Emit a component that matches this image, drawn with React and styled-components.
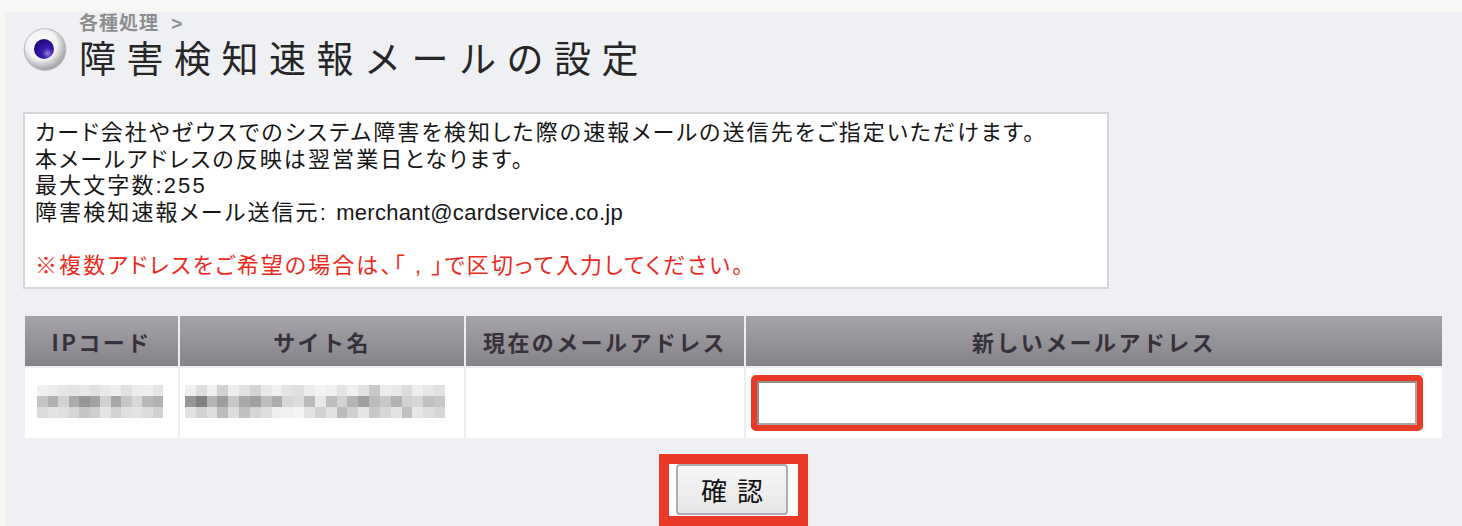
import React from 'react';
import styled, { createGlobalStyle } from 'styled-components';

const GlobalStyle = createGlobalStyle`
  html, body { margin: 0; padding: 0; background: #f7f7f6; }
  body {
    font-family: "Noto Sans CJK JP", "Noto Sans", sans-serif;
    color: #151515;
  }
`;

const RED = '#e93a28';
const STACK = '"Liberation Sans", "Noto Sans CJK JP", sans-serif';

const Panel = styled.main`
  display: flow-root;
  margin: 12px 0 0 5px;
  min-height: 514px;
  padding: 0 0 0 18px;
  box-sizing: border-box;
  background: #eff0f4;
`;

const Heading = styled.header`
  display: flex;
  align-items: flex-start;
  gap: 12px;
`;

const Bullet = styled.svg`
  flex: none;
  margin-top: 16px;
`;

const HeadingText = styled.div`
  display: flex;
  flex-direction: column;
`;

const Crumb = styled.div`
  font-family: ${STACK};
  font-size: 19px;
  line-height: 24px;
  font-weight: 700;
  color: #8e8e8e;
  letter-spacing: 1px;
  word-spacing: 6px;
`;

const Title = styled.h1`
  margin: 0;
  font-family: ${STACK};
  font-size: 37px;
  line-height: 50px;
  font-weight: 400;
  letter-spacing: 10.5px;
  color: #262626;
`;

const InfoBox = styled.section`
  margin-top: 26px;
  width: 1086px;
  box-sizing: border-box;
  border: 2px solid #d6d6d8;
  background: #fff;
  padding: 6px 10px 8px;
  font-family: ${STACK};
  font-size: 22px;
  line-height: 26.5px;
  letter-spacing: 2.1px;
  font-feature-settings: "palt";
  color: #161616;
`;

const Line = styled.div`
  color: ${(p) => (p.$alert ? '#ec2a1c' : 'inherit')};
  margin-top: ${(p) => (p.$gap ? '26.5px' : '0')};
`;

const Mail = styled.span`
  font-size: 22px;
  letter-spacing: 0.3px;
`;

const Table = styled.div`
  margin: 27px 0 0 2px;
  width: 1417px;
  display: grid;
  grid-template-columns: 153px 284px 278px 696px;
  grid-template-rows: 50px 70px;
  gap: 2px;
  background: #eeeef1;
`;

const HeadCell = styled.div`
  display: flex;
  align-items: center;
  justify-content: center;
  background: linear-gradient(#a5a3a9, #858489);
  font-size: 22px;
  font-weight: 700;
  letter-spacing: 2.4px;
  color: #37313c;
`;

const BodyCell = styled.div`
  display: flex;
  align-items: center;
  background: #fff;
  padding: ${(p) => p.$pad || '0'};
  box-sizing: border-box;
`;

const Mosaic = styled.div`
  display: grid;
  grid-template-columns: repeat(${(p) => p.$cols}, ${(p) => p.$tile}px);
  grid-auto-rows: 10.7px;
  margin-left: ${(p) => p.$offset}px;
  margin-top: -3px;
`;

const Tile = styled.span`
  display: block;
`;

const Highlight = styled.div`
  flex: 1;
  border: 6px solid ${RED};
  border-radius: 5px;
`;

const TextInput = styled.input`
  display: block;
  width: 100%;
  height: 44px;
  box-sizing: border-box;
  margin: 0;
  border: 2px solid #a6a6a6;
  border-top-color: #8e8e8e;
  border-left-color: #8e8e8e;
  background: #fff;
  outline: none;
`;

const Actions = styled.div`
  margin: 16px 0 0 2px;
  width: 1417px;
  display: flex;
  justify-content: center;
`;

const ActionFrame = styled.div`
  display: flex;
  border: 10px solid ${RED};
  background: #fff;
  padding: 0 10px 1px 7px;
`;

const ConfirmButton = styled.button`
  width: 112px;
  height: 51px;
  padding: 0;
  border: 2px solid #adadad;
  border-radius: 4px;
  background: linear-gradient(#f6f6f6, #e6e6e6);
  font-family: "Noto Sans CJK JP", sans-serif;
  font-size: 26px;
  word-spacing: 4px;
  color: #111;
`;

const shade = (v) => {
  const c = Math.round(v);
  return `rgb(${c},${c},${c})`;
};

const mosaicA = [
  [240, 236, 230, 228, 232, 226, 232, 238, 226, 236, 238, 230],
  [196, 176, 210, 170, 150, 162, 208, 166, 198, 216, 184, 178],
  [220, 228, 224, 214, 198, 206, 228, 210, 224, 228, 220, 208],
];

const mosaicB = [
  [238, 222, 240, 210, 238, 226, 212, 232, 240, 228, 224, 236, 244, 240, 228, 240, 226, 200, 236, 232, 220, 238, 230, 226],
  [150, 128, 180, 158, 200, 170, 160, 190, 172, 214, 220, 186, 232, 190, 210, 180, 160, 188, 200, 178, 210, 214, 192, 200],
  [226, 210, 222, 188, 220, 192, 212, 222, 238, 240, 244, 228, 210, 226, 188, 208, 230, 200, 214, 228, 192, 230, 222, 214],
];

function Pixels({ data, tile, offset }) {
  return (
    <Mosaic $cols={data[0].length} $tile={tile} $offset={offset}>
      {data.flatMap((row, r) =>
        row.map((v, c) => <Tile key={`${r}-${c}`} style={{ background: shade(v) }} />)
      )}
    </Mosaic>
  );
}

export default function App() {
  return (
    <>
      <GlobalStyle />
      <Panel>
        <Heading>
          <Bullet width="44" height="43" viewBox="0 0 44 43">
            <defs>
              <radialGradient id="ring" cx="42%" cy="38%" r="60%">
                <stop offset="0%" stopColor="#ffffff" />
                <stop offset="60%" stopColor="#f3f3f4" />
                <stop offset="100%" stopColor="#a6a6ab" />
              </radialGradient>
              <radialGradient id="dot" cx="68%" cy="72%" r="75%">
                <stop offset="0%" stopColor="#9282dc" />
                <stop offset="35%" stopColor="#3d1cae" />
                <stop offset="100%" stopColor="#1f067a" />
              </radialGradient>
            </defs>
            <circle cx="22" cy="21.5" r="20.8" fill="url(#ring)" stroke="#b9b9bd" strokeWidth="1" />
            <circle cx="21" cy="21" r="10" fill="url(#dot)" />
          </Bullet>
          <HeadingText>
            <Crumb>各種処理 &gt;</Crumb>
            <Title>障害検知速報メールの設定</Title>
          </HeadingText>
        </Heading>

        <InfoBox>
          <Line>カード会社やゼウスでのシステム障害を検知した際の速報メールの送信先をご指定いただけます。</Line>
          <Line>本メールアドレスの反映は翌営業日となります。</Line>
          <Line>最大文字数:255</Line>
          <Line>
            障害検知速報メール送信元: <Mail>merchant@cardservice.co.jp</Mail>
          </Line>
          <Line $alert $gap>※複数アドレスをご希望の場合は、「 , 」で区切って入力してください。</Line>
        </InfoBox>

        <Table>
          <HeadCell>IPコード</HeadCell>
          <HeadCell>サイト名</HeadCell>
          <HeadCell>現在のメールアドレス</HeadCell>
          <HeadCell>新しいメールアドレス</HeadCell>
          <BodyCell>
            <Pixels data={mosaicA} tile={10.5} offset={12} />
          </BodyCell>
          <BodyCell>
            <Pixels data={mosaicB} tile={10.83} offset={5} />
          </BodyCell>
          <BodyCell />
          <BodyCell $pad="7px 19px 7px 5px">
            <Highlight>
              <TextInput type="text" />
            </Highlight>
          </BodyCell>
        </Table>

        <Actions>
          <ActionFrame>
            <ConfirmButton type="button">確 認</ConfirmButton>
          </ActionFrame>
        </Actions>
      </Panel>
    </>
  );
}
